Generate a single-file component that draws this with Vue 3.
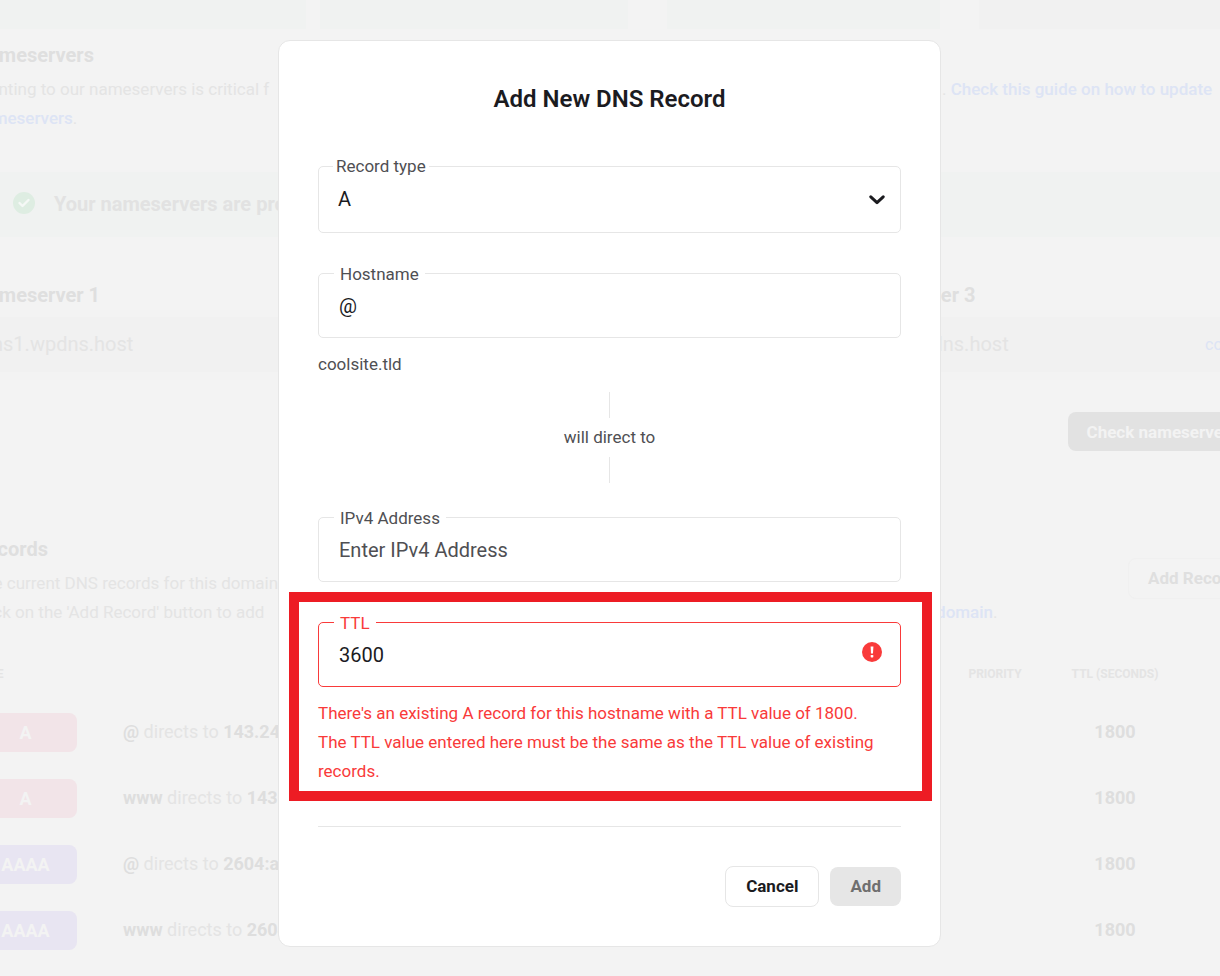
<template>
  <div class="app">
    <main class="page">
      <div class="cards">
        <div class="card card-ok"></div>
        <div class="card card-ok"></div>
        <div class="card card-ok card-gap"></div>
        <div class="card card-gap"></div>
      </div>

      <section class="intro">
        <h2>Nameservers</h2>
        <p class="split">
          <span>Pointing to our nameservers is critical f</span>
          <span class="split-end">. <a href="#">Check this guide on how to update</a></span>
        </p>
        <p><a href="#">nameservers</a>.</p>
      </section>

      <div class="notice">
        <svg class="notice-icon" viewBox="0 0 22 22" aria-hidden="true">
          <circle cx="11" cy="11" r="11" fill="#deede2" />
          <path d="M6.5 11l3 3 6-6" fill="none" stroke="#f5f8f6" stroke-width="2.4" stroke-linecap="round" stroke-linejoin="round" />
        </svg>
        <strong>Your nameservers are properly</strong>
      </div>

      <div class="servers">
        <div v-for="n in 3" :key="n" class="server">
          <h2>Nameserver {{ n }}</h2>
          <div class="server-host">
            <span>ns{{ n }}.wpdns.host</span>
            <a href="#">copy</a>
          </div>
        </div>
      </div>

      <div class="check-row">
        <button type="button" class="btn btn-check">Check nameservers</button>
      </div>

      <section class="records-head">
        <div class="records-text">
          <h2>Records</h2>
          <p>The current DNS records for this domain</p>
          <p class="split">
            <span>Click on the 'Add Record' button to add</span>
            <span class="split-domain"><a href="#">domain</a>.</span>
          </p>
        </div>
        <button type="button" class="btn btn-ghost">Add Record</button>
      </section>

      <table class="records">
        <thead>
          <tr>
            <th class="col-type">TYPE</th>
            <th></th>
            <th class="col-num">PRIORITY</th>
            <th class="col-num">TTL (SECONDS)</th>
            <th class="col-end"></th>
          </tr>
        </thead>
        <tbody>
          <tr v-for="(item, idx) in records" :key="idx">
            <td><span :class="['badge', item.type === 'A' ? 'badge-a' : 'badge-aaaa']">{{ item.type }}</span></td>
            <td class="target"><b>{{ item.host }}</b> directs to <b>{{ item.value }}</b></td>
            <td></td>
            <td class="ttl">{{ item.ttl }}</td>
            <td></td>
          </tr>
        </tbody>
      </table>
    </main>

    <div class="overlay">
      <form class="modal" role="dialog" aria-labelledby="modal-title" @submit.prevent>
        <h1 id="modal-title">Add New DNS Record</h1>

        <div class="field field-select">
          <label for="type">Record type</label>
          <select id="type" v-model="form.type">
            <option>A</option>
            <option>AAAA</option>
          </select>
          <svg class="chevron" viewBox="0 0 16 10" aria-hidden="true">
            <path d="M1.8 1.8L8 7.6l6.2-5.8" fill="none" stroke="#1b1b1f" stroke-width="3" stroke-linecap="round" stroke-linejoin="round" />
          </svg>
        </div>

        <div class="field field-host">
          <label for="host">Hostname</label>
          <input id="host" v-model="form.host" type="text" />
        </div>
        <p class="domain">coolsite.tld</p>

        <div class="direct">
          <span class="direct-line"></span>
          <span>will direct to</span>
          <span class="direct-line"></span>
        </div>

        <div class="field">
          <label for="ip">IPv4 Address</label>
          <input id="ip" v-model="form.ip" type="text" placeholder="Enter IPv4 Address" />
        </div>

        <div class="highlight">
          <div class="field field-error">
            <label for="ttl">TTL</label>
            <input id="ttl" v-model="form.ttl" type="text" aria-describedby="ttl-error" />
            <svg class="alert" viewBox="0 0 20 20" aria-hidden="true">
              <circle cx="10" cy="10" r="10" fill="#f93a3a" />
              <path d="M8.6 4.4h2.8l-.4 7H9z" fill="#fff" />
              <rect x="8.7" y="13" width="2.6" height="2.4" rx=".6" fill="#fff" />
            </svg>
          </div>
          <p id="ttl-error" class="error">
            There's an existing A record for this hostname with a TTL value of 1800.<br />
            The TTL value entered here must be the same as the TTL value of existing<br />
            records.
          </p>
        </div>

        <div class="actions">
          <button type="button" class="btn btn-cancel">Cancel</button>
          <button type="submit" class="btn btn-add" disabled>Add</button>
        </div>
      </form>
    </div>
  </div>
</template>

<script setup>
import { reactive } from 'vue'

const form = reactive({
  type: 'A',
  host: '@',
  ip: '',
  ttl: '3600'
})

const records = [
  { type: 'A', host: '@', value: '143.24', ttl: 1800 },
  { type: 'A', host: 'www', value: '143.24', ttl: 1800 },
  { type: 'AAAA', host: '@', value: '2604:a', ttl: 1800 },
  { type: 'AAAA', host: 'www', value: '2604:a', ttl: 1800 }
]
</script>

<style>
body {
  background: #f3f3f3;
}
</style>

<style scoped>
.app {
  display: grid;
  min-height: 100vh;
  overflow: hidden;
  font-family: Roboto, sans-serif;
  font-size: 17px;
  line-height: 29px;
}

.app * {
  box-sizing: border-box;
}

h1, h2, p {
  margin: 0;
}

button, input, select {
  font-family: inherit;
}

/* page behind the dialog */
.page,
.overlay {
  grid-area: 1 / 1;
  min-width: 0;
}

.page {
  margin: 0 -37px 0 -26px;
  color: #e4e4e4;
}

.page h2 {
  font-size: 20px;
  font-weight: 700;
  line-height: 30px;
  color: #dfdfdf;
}

.page a {
  color: #dde4f5;
  font-weight: 500;
  text-decoration: none;
}

.cards {
  display: grid;
  grid-template-columns: 332fr 308fr 298fr 303fr;
  gap: 14px;
  height: 29px;
}

.card {
  background: #f1f1f1;
}

.card-ok {
  background: #f0f2f1;
}

.card-gap {
  margin-left: 25px;
}

.intro {
  padding-top: 11px;
}

.intro h2 {
  margin-bottom: 5px;
}

.split {
  display: flex;
  justify-content: space-between;
  white-space: nowrap;
}

.split-end {
  width: 315px;
}

.notice {
  display: flex;
  align-items: center;
  gap: 19px;
  height: 65px;
  margin-top: 39px;
  padding-left: 39px;
  background: #f0f2f1;
  color: #e2e2e2;
  font-size: 20px;
}

.notice-icon {
  width: 22px;
  height: 22px;
  margin-bottom: 4px;
}

.servers {
  display: grid;
  grid-template-columns: repeat(3, 1fr);
  gap: 30px;
  margin-top: 43px;
}

.server h2 {
  margin-bottom: 7px;
}

.server-host {
  display: flex;
  align-items: center;
  justify-content: space-between;
  height: 55px;
  padding: 0 18px;
  background: #f1f1f1;
  font-size: 20px;
}

.server-host a {
  font-size: 16px;
  font-weight: 400;
}

.btn {
  height: 39px;
  border: 0;
  border-radius: 8px;
  padding: 0 19px;
  font-size: 17px;
  font-weight: 700;
}

.check-row {
  display: flex;
  justify-content: flex-end;
  margin-top: 40px;
}

.btn-check {
  background: #e2e2e2;
  color: #f3f3f3;
}

.records-head {
  display: flex;
  align-items: flex-start;
  margin-top: 83px;
}

.records-text {
  flex: 1;
}

.records-text h2 {
  margin-bottom: 5px;
}

.split-domain {
  width: 192px;
}

.btn-ghost {
  height: 41px;
  margin-top: 24px;
  padding-bottom: 2px;
  border: 1px solid #f0f0f0;
  background: transparent;
  color: #dfdfdf;
}

.records {
  width: 100%;
  margin-top: 23px;
  border-collapse: collapse;
  table-layout: fixed;
}

.records th {
  height: 49px;
  padding: 0;
  font-size: 12px;
  font-weight: 700;
  text-align: left;
}

.records .col-type {
  width: 149px;
}

.records .col-num {
  width: 120px;
  text-align: center;
}

.records .col-end {
  width: 82px;
}

.records td {
  height: 66px;
  padding: 0;
}

.badge {
  display: block;
  width: 103px;
  border-radius: 8px;
  color: #f3f3f3;
  font-size: 18px;
  font-weight: 700;
  line-height: 39px;
  text-align: center;
}

.badge-a {
  background: #f2e4e8;
}

.badge-aaaa {
  background: #e8e5f2;
}

.records .target,
.records .ttl {
  padding-bottom: 2px;
  font-size: 18px;
}

.target b,
.ttl {
  color: #dedede;
  font-weight: 700;
}

.ttl {
  text-align: center;
}

/* dialog */
.overlay {
  position: relative;
  display: flex;
  align-items: flex-start;
  justify-content: center;
  padding: 40px 1px 29px 0;
}

.modal {
  width: 100%;
  max-width: 663px;
  padding: 39px;
  border: 1px solid #e6e6e6;
  border-radius: 12px;
  background: #fff;
  color: #4f4f53;
}

.modal h1 {
  margin-top: 4px;
  color: #1b1b1f;
  font-size: 24px;
  font-weight: 600;
  line-height: 30px;
  text-align: center;
}

.field {
  position: relative;
  height: 65px;
  border: 1px solid #e6e6e6;
  border-radius: 5px;
}

/* label sits on the top border */
.field label {
  position: absolute;
  top: -14px;
  left: 15px;
  padding: 0 6px;
  background: #fff;
}

.field input,
.field select {
  width: 100%;
  height: 100%;
  border: 0;
  outline: 0;
  padding: 0 20px;
  background: transparent;
  color: #1b1b1f;
  font-size: 20px;
}

.field input::placeholder {
  color: #4f4f53;
  opacity: 1;
}

.field select {
  appearance: none;
  padding: 0 19px 2px;
}

.field-select {
  height: 67px;
  margin-top: 52px;
}

.field-select label {
  top: -15px;
  left: 14px;
  padding: 0 3px;
}

.chevron {
  position: absolute;
  top: 28px;
  right: 15px;
  width: 16px;
  height: 10px;
  pointer-events: none;
}

.field-host {
  margin-top: 40px;
}

.domain {
  margin-top: 12px;
}

.direct {
  display: flex;
  flex-direction: column;
  align-items: center;
  gap: 5px;
  margin: 13px 0 34px;
}

.direct-line {
  width: 1px;
  height: 26px;
  background: #e6e6e6;
}

.highlight {
  margin: 10px -31px 25px -29px;
  padding: 20px 21px 5px 19px;
  border: 10px solid #ed1c24;
}

.field-error {
  border-color: #f93a3a;
}

.field-error label,
.error {
  color: #f93a3a;
}

.alert {
  position: absolute;
  top: 19px;
  right: 18px;
  width: 20px;
  height: 20px;
}

.error {
  margin-top: 12px;
}

.actions {
  display: flex;
  align-items: center;
  justify-content: flex-end;
  gap: 11px;
  padding-top: 39px;
  border-top: 1px solid #e6e6e6;
}

.btn-cancel,
.btn-add {
  padding: 0 20px 2px;
}

.btn-cancel {
  height: 41px;
  border: 1px solid #e6e6e6;
  background: #fff;
  color: #1b1b1f;
}

.btn-add {
  background: #e6e6e6;
  color: #6f6f6f;
}
</style>
